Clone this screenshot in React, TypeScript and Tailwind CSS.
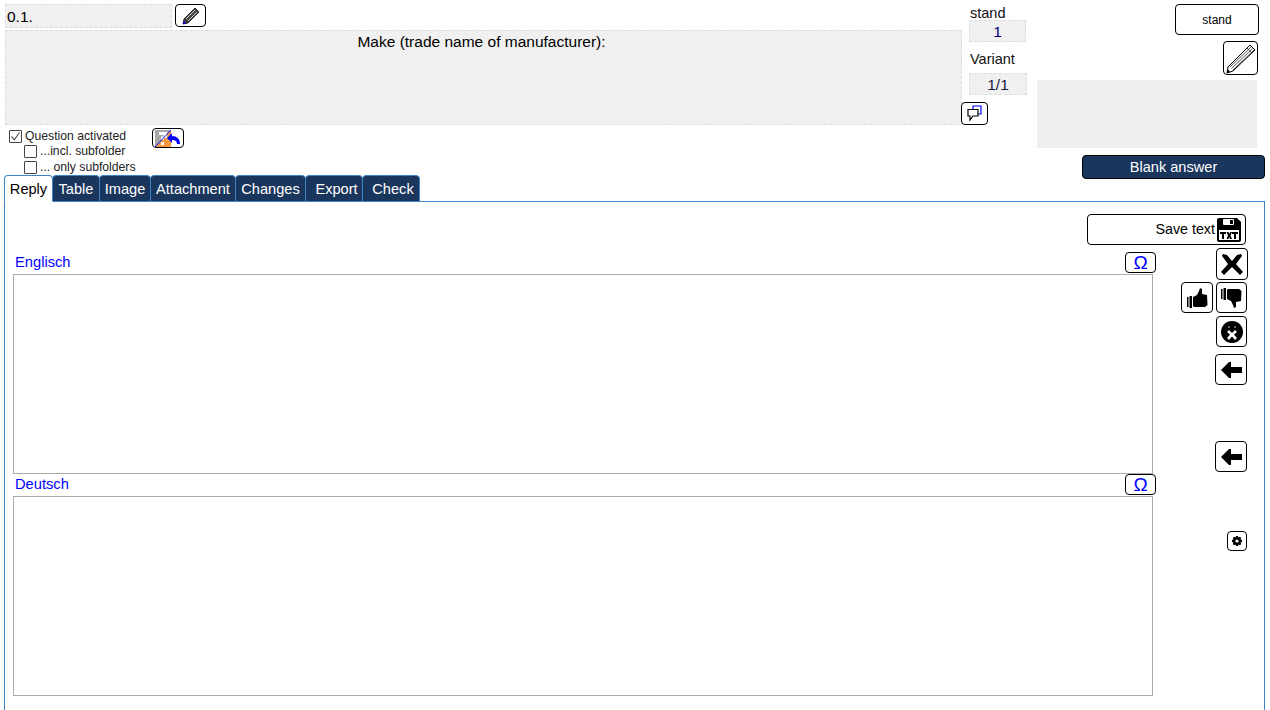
import type { ReactNode } from 'react'

const TABS = [
  { label: 'Reply', w: 'w-[49px]', extra: '' },
  { label: 'Table', w: 'w-[48px]', extra: '' },
  { label: 'Image', w: 'w-[52px]', extra: '' },
  { label: 'Attachment', w: 'w-[86px]', extra: '' },
  { label: 'Changes', w: 'w-[71px]', extra: '' },
  { label: 'Export', w: 'w-[58px]', extra: 'pl-[5px]' },
  { label: 'Check', w: 'w-[58px]', extra: 'pl-[4px]' },
]

function IconButton({ className, children }: { className: string; children: ReactNode }) {
  return (
    <div className={`flex shrink-0 items-center justify-center rounded-[4px] border border-black bg-white ${className}`}>
      {children}
    </div>
  )
}

function Check({ checked, label, className }: { checked?: boolean; label: string; className: string }) {
  return (
    <div className={`flex h-[16px] items-center text-[12.2px] text-[#222] ${className}`}>
      <div className="flex h-[13px] w-[13px] items-center justify-center rounded-[1px] border border-[#444] bg-white">
        {checked && (
          <svg width="11" height="11" viewBox="0 0 11 11">
            <path d="M1.5 5.5 L4.3 8.8 L9.5 1.5" fill="none" stroke="#555" strokeWidth="1.2" />
          </svg>
        )}
      </div>
      <span className="ml-[3px]">{label}</span>
    </div>
  )
}

function ArrowLeft() {
  return (
    <svg width="21" height="16" viewBox="0 0 21 16">
      <path d="M0 8 L8 0 H10 V5 H21 V11 H10 V16 H8 Z" fill="#000" />
    </svg>
  )
}

function Omega() {
  return <span className="text-[19px] leading-none text-[#0000ff]">Ω</span>
}

function Thumb({ down }: { down?: boolean }) {
  return (
    <svg width="21" height="20" viewBox="0 0 21 20" className={down ? 'rotate-180 -scale-x-100' : ''}>
      <path d="M0 9 H1.5 V19 H0 Z M2.5 8 H5 V20 H2.5 Z" fill="#000" />
      <path d="M6 9 L10 7 L12 3 L13 0 L15 1 L15 6 L20 7 L20.5 17 L18 19 L7 19 L6 18 Z" fill="#000" />
    </svg>
  )
}

export default function App() {
  return (
    <div className="h-[710px] w-[1270px] overflow-hidden bg-white font-['Liberation_Sans',sans-serif] text-black">
      {/* Header */}
      <div className="flex h-[175px]">
        <div className="relative ml-[5px] w-[957px] pt-[4px]">
          <div className="flex">
            <div className="h-[24px] w-[167px] border border-dashed border-[#ddd] bg-[#f0f0f0] pl-[1px] text-[15.5px] leading-[23px]">0.1.</div>
            <IconButton className="ml-[3px] h-[23px] w-[31px]">
              <svg width="18" height="18" viewBox="0 0 18 18">
                <path d="M13 1 L17 5 L6 16 L1 17 L2 12 Z" fill="#444" stroke="#000" strokeWidth="0.8" />
                <path d="M4 12 L13 3 M6 14 L15 5" stroke="#ccc" strokeWidth="1" />
                <path d="M1 17 L2 14 L4 16 Z" fill="#00f" />
              </svg>
            </IconButton>
          </div>
          <div className="mt-[2px] h-[95px] border border-dashed border-[#ddd] bg-[#f0f0f0] pr-[4px] text-center text-[15.5px] leading-[22px]">
            Make (trade name of manufacturer):
          </div>
          <div className="relative pt-[3px]">
            <Check checked label="Question activated" className="ml-[4px]" />
            <Check label="...incl. subfolder" className="ml-[19px] mt-[-1px]" />
            <Check label="... only subfolders" className="ml-[19px]" />
            <IconButton className="absolute left-[147px] top-[3px] h-[20px] w-[32px]">
              <svg width="26" height="17" viewBox="0 0 26 17">
                <path d="M0 0 H16 L0 17 Z" fill="#a8a8a8" />
                <path d="M16 0 V17 H0 Z" fill="#f59a3c" />
                <path d="M4 2 H12 V8 H9 V10 H6 V6.5 H9 V5 H4 Z M6 12 H9 V15 H6 Z" fill="#fff" />
                <path d="M16 0 L0 17" stroke="#00f" strokeWidth="1" />
                <path d="M12 8 L17 3 V6 C22 6 25 9 25 14 H22 C22 11 20 10 17 10 V13 Z" fill="#00f" />
              </svg>
            </IconButton>
          </div>
          <IconButton className="absolute right-[-26px] top-[102px] h-[23px] w-[27px]">
            <svg width="20" height="17" viewBox="0 0 20 17">
              <path d="M8 4 V1 H16 V9 H13" fill="none" stroke="#00f" strokeWidth="1.2" />
              <path d="M3 4.5 H13 V11 H8 L5 15 V11 H3 Z" fill="#fff" stroke="#000" strokeWidth="1.2" />
            </svg>
          </IconButton>
        </div>
        <div className="ml-[7px] w-[58px] text-[14.5px] text-[#111]">
          <div className="ml-px mt-[5px] h-[15px] leading-[16px]">stand</div>
          <div className="h-[22px] w-[57px] border border-dashed border-[#ddd] bg-[#f0f0f0] text-center text-[15.5px] leading-[22px] text-[#000080]">1</div>
          <div className="ml-px mt-[9px] h-[22px] leading-[16px]">Variant</div>
          <div className="h-[22px] w-[58px] border border-dashed border-[#ddd] bg-[#f0f0f0] text-center text-[15.5px] leading-[22px] text-[#1a1a40]">1/1</div>
        </div>
        <div className="ml-[10px] flex w-[228px] flex-col items-end">
          <div className="mr-[6px] mt-[4px] flex h-[31px] w-[84px] shrink-0 items-center justify-center rounded-[4px] border border-black text-[12px]">stand</div>
          <IconButton className="mr-[7px] mt-[6px] h-[34px] w-[35px]">
            <svg width="31" height="31" viewBox="0 0 31 31">
              <path d="M25 2 L30 7 L8 28 L2 30 L3 24 Z" fill="#fff" stroke="#000" strokeWidth="1" />
              <path d="M5 24 L26 4 M6.5 25.5 L27.5 5.5 M8 27 L29 7 M22 5 L27 10" fill="none" stroke="#000" strokeWidth="0.7" />
              <path d="M2.5 26 L5 28.5 L2 30 Z" fill="#000" />
            </svg>
          </IconButton>
          <div className="mr-[8px] mt-[5px] h-[68px] w-[220px] shrink-0 bg-[#efefef]" />
          <div className="mt-[7px] flex h-[24px] w-[183px] shrink-0 items-center justify-center rounded-[4px] border border-black bg-[#1a365d] pt-[1px] text-[14.6px] text-white">Blank answer</div>
        </div>
      </div>

      {/* Tabs */}
      <div className="ml-[4px] flex h-[27px]">
        {TABS.map((t, i) => (
          <div
            key={t.label}
            className={`flex items-center justify-center rounded-t-[4px] border border-[#3d85c6] pt-[2px] text-[14.6px] ${t.w} ${t.extra} ${
              i === 0 ? 'relative z-10 border-b-white bg-white text-black' : 'ml-[-1px] bg-[#1a365d] text-white'
            }`}
          >
            {t.label}
          </div>
        ))}
      </div>

      {/* Panel */}
      <div className="ml-[4px] mt-[-1px] h-[520px] w-[1261px] border border-[#3d85c6] pl-[8px]">
        <div className="flex">
          <div className="w-[1143px] pt-[50px]">
            <div className="flex h-[22px] items-start justify-between">
              <span className="ml-[2px] mt-[-1px] text-[14.7px] text-[#0000ff]">Englisch</span>
              <IconButton className="h-[21px] w-[31px]"><Omega /></IconButton>
            </div>
            <div className="h-[200px] w-[1140px] border border-[#aaa] bg-white" />
            <div className="flex h-[22px] items-start justify-between">
              <span className="ml-[2px] mt-[-1px] text-[14.7px] text-[#0000ff]">Deutsch</span>
              <IconButton className="h-[21px] w-[31px]"><Omega /></IconButton>
            </div>
            <div className="h-[200px] w-[1140px] border border-[#aaa] bg-white" />
          </div>
          <div className="flex w-[108px] flex-col items-end pt-[12px]">
            <div className="mr-[18px] flex h-[31px] w-[159px] shrink-0 items-center justify-end rounded-[4px] border border-black text-[14.3px]">
              <span className="mr-[2px]">Save text</span>
              <svg width="24" height="24" viewBox="0 0 24 24" className="mr-[4px]">
                <path d="M2 0 H20 L24 4 V22 Q24 24 22 24 H2 Q0 24 0 22 V2 Q0 0 2 0 Z" fill="#000" />
                <rect x="6" y="1" width="11" height="6" rx="1" fill="#fff" />
                <rect x="13" y="2" width="3" height="4" fill="#000" />
                <rect x="2" y="12" width="20" height="10" fill="#fff" />
                <path d="M3 14 H9 V16 H7 V21 H5 V16 H3 Z M9.5 14 H11.5 L12.3 16 L13 14 H15 L13.5 17.5 L15 21 H13 L12.2 19 L11.5 21 H9.5 L11 17.5 Z M15 14 H21 V16 H19 V21 H17 V16 H15 Z" fill="#000" />
              </svg>
            </div>
            <IconButton className="mr-[16px] mt-[3px] h-[32px] w-[32px]">
              <svg width="22" height="21" viewBox="0 0 22 21">
                <path d="M2 0 L6 1 L11 7 L16 1 L20 0 L21 2 L15 10 L22 18 L19 21 L11 13 L3 21 L0 18 L7 10 L1 2 Z" fill="#000" />
              </svg>
            </IconButton>
            <div className="mr-[17px] mt-[2px] flex gap-[3px]">
              <IconButton className="h-[31px] w-[32px]"><Thumb /></IconButton>
              <IconButton className="h-[31px] w-[31px]"><Thumb down /></IconButton>
            </div>
            <IconButton className="mr-[17px] mt-[3px] h-[31px] w-[31px]">
              <svg width="22" height="22" viewBox="0 0 22 22">
                <circle cx="11" cy="11" r="11" fill="#000" />
                <path d="M6 11 L9 13.5 L6 17 L8 19 L11 15.5 L14 19 L16 17 L13 13.5 L16 11 L14 9 L11 12 L8 9 Z" fill="#fff" />
                <rect x="7" y="5" width="2" height="2" fill="#666" />
                <rect x="13" y="5" width="2" height="2" fill="#666" />
              </svg>
            </IconButton>
            <IconButton className="mr-[17px] mt-[7px] h-[31px] w-[32px]"><ArrowLeft /></IconButton>
            <IconButton className="mr-[17px] mt-[56px] h-[31px] w-[32px]"><ArrowLeft /></IconButton>
            <IconButton className="mr-[17px] mt-[59px] h-[20px] w-[20px]">
              <svg width="10" height="10" viewBox="0 0 10 10">
                <path d="M4 0 H6 L6.4 1.5 L8 .8 L9.2 2 L8.5 3.6 L10 4 V6 L8.5 6.4 L9.2 8 L8 9.2 L6.4 8.5 L6 10 H4 L3.6 8.5 L2 9.2 L.8 8 L1.5 6.4 L0 6 V4 L1.5 3.6 L.8 2 L2 .8 L3.6 1.5 Z" fill="#000" />
                <circle cx="5" cy="5" r="1.6" fill="#fff" />
              </svg>
            </IconButton>
          </div>
        </div>
      </div>
    </div>
  )
}
